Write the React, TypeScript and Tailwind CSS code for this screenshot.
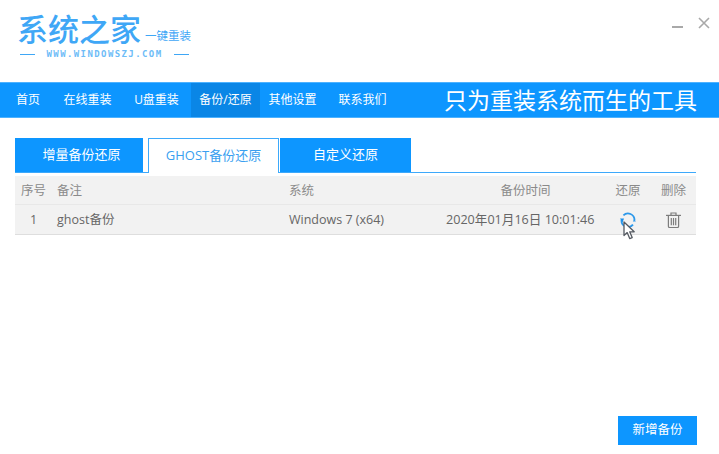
import React from 'react';

const cjk = { fontFamily: '"Open Sans", "Noto Sans CJK SC", sans-serif' };

const RestoreIcon = () => (
    <svg width="16" height="16" viewBox="0 0 16 16" fill="none">
        <path d="M3.400 3.400A6.500 6.500 0 0 1 14.500 8" stroke="#2c98ea" strokeWidth="1.800"/>
        <path d="M13 12.600A6.500 6.500 0 0 1 1.500 8" stroke="#2c98ea" strokeWidth="1.800"/>
        <path d="M0 6.500h4L2.500 10.500z" fill="#1c8fe8"/>
        <path d="M12.800 9.500h3l-1.400-2.800z" fill="#2c98ea"/>
    </svg>
);

const TrashIcon = () => (
    <svg width="15" height="16" viewBox="0 0 15 16" fill="none" stroke="#7d7d7d" strokeWidth="1.200">
        <path d="M0 3.400h15"/>
        <path d="M5 3.200V1h5v2.200"/>
        <path d="M2.400 3.600v10.600c0 .8.500 1.300 1.300 1.300h7.600c.8 0 1.300-.5 1.300-1.300V3.600"/>
        <path d="M5.300 6v7.200M7.500 6v7.200M9.700 6v7.200"/>
    </svg>
);

const Cursor = () => (
    <svg width="13" height="19" viewBox="0 0 13 19" className="absolute left-[3px] top-[9px]">
        <path d="M1 1v13.500l3.200-2.900 2.500 6 2.500-1-2.500-5.800h4.500z" fill="#fff" stroke="#555a62" strokeWidth="1.300" strokeLinejoin="round"/>
    </svg>
);

const navBefore = ['在线重装', 'U盘重装'];

export default function App() {
    return (
        <div className="w-[719px] h-[454px] bg-white flex flex-col overflow-hidden" style={cjk}>
            {/* header */}
            <div className="h-[82px] flex justify-between shrink-0">
                <div className="pl-[17px] pt-[12px] w-[200px]">
                    <div className="flex items-end h-[34px]">
                        <span className="text-[31px] leading-[34px] font-medium text-[#3fa7f6] whitespace-nowrap">系统之家</span>
                        <span className="text-[11.500px] leading-[14px] text-[#3fa7f6] ml-[4px] mb-[3px] whitespace-nowrap">一键重装</span>
                    </div>
                    <div className="flex items-center mt-[2px] ml-[3px] w-[169px]">
                        <div className="w-[15px] h-px bg-[#3fa7f6]"/>
                        <span className="flex-1 text-center text-[9px] leading-[12px] font-bold tracking-[1.400px] text-[#6dbcf7] whitespace-nowrap" style={{fontFamily: '"DejaVu Sans Mono", monospace'}}>WWW.WINDOWSZJ.COM</span>
                        <div className="w-[15px] h-px bg-[#3fa7f6]"/>
                    </div>
                </div>
                <div className="flex items-start pr-[9px] pt-[12px] gap-[15px] h-fit">
                    <div className="w-[11px] h-[2px] bg-[#a9a9a9] mt-[14px]"/>
                    <svg width="12" height="12" viewBox="0 0 12 12" stroke="#a9a9a9" strokeWidth="1.600" className="mt-[5px]">
                        <path d="M1 1l10 10M11 1L1 11"/>
                    </svg>
                </div>
            </div>

            {/* nav */}
            <div className="h-[36px] bg-[#0d96ff] border-t border-b border-[#4db2ff] flex items-stretch shrink-0 text-white text-[12px]">
                <div className="w-[53px] pl-4 flex items-center">首页</div>
                {navBefore.map((item) => (
                    <div key={item} className="w-[69px] flex items-center justify-center">{item}</div>
                ))}
                <div className="w-[69px] flex items-center justify-center bg-[#0a86e6]">备份/还原</div>
                <div className="w-[69px] pr-[4px] flex items-center justify-center">其他设置</div>
                <div className="w-[69px] pr-[2px] flex items-center justify-center">联系我们</div>
                <div className="flex-1 flex items-center justify-end pr-[22px] text-[23px] whitespace-nowrap">
                    只为重装系统而生的工具
                </div>
            </div>

            {/* content */}
            <div className="flex-1 flex flex-col pl-[15px] pr-[23px] pt-[20px]">
                <div className="flex items-end h-[35px] border-b border-[#3da9fb] text-[13px]">
                    <div className="w-[128px] h-[34px] pl-[5px] bg-[#0d96ff] text-white flex items-center justify-center">增量备份还原</div>
                    <div className="w-[131px] h-[35px] ml-[5px] bg-white text-[#3a9ff0] border border-b-0 border-[#3da9fb] flex items-center justify-center -mb-px">GHOST备份还原</div>
                    <div className="w-[131px] h-[34px] ml-px bg-[#0d96ff] text-white flex items-center justify-center">自定义还原</div>
                </div>

                <div className="mt-[3px] bg-[#f2f2f2] text-[12.500px] text-[#8a8a8a]">
                    <div className="grid grid-cols-[37px_237px_151px_165px_46px_45px] h-[29px] pt-[2px] items-center border-b border-[#e8e8e8]">
                        <div className="text-center">序号</div>
                        <div className="pl-[5px]">备注</div>
                        <div>系统</div>
                        <div className="text-center pl-[6px]">备份时间</div>
                        <div className="text-center">还原</div>
                        <div className="text-center">删除</div>
                    </div>
                    <div className="grid grid-cols-[37px_237px_151px_165px_46px_45px] h-[30px] pt-[2px] items-center border-b border-[#dedede] text-[#666]">
                        <div className="text-center">1</div>
                        <div className="pl-[5px]">ghost备份</div>
                        <div>Windows 7 (x64)</div>
                        <div className="whitespace-nowrap ml-[6px] text-[12.600px]">2020年01月16日 10:01:46</div>
                        <div className="flex justify-center -mt-[2px]">
                            <div className="relative w-[16px] h-[16px]">
                                <RestoreIcon/>
                                <Cursor/>
                            </div>
                        </div>
                        <div className="flex justify-center -mt-[2px]"><TrashIcon/></div>
                    </div>
                </div>

                <div className="flex-1 flex items-end justify-end pb-[9px]">
                    <div className="w-[79px] h-[29px] -mr-px bg-[#0d96ff] text-white text-[12.500px] flex items-center justify-center">新增备份</div>
                </div>
            </div>
        </div>
    );
}
